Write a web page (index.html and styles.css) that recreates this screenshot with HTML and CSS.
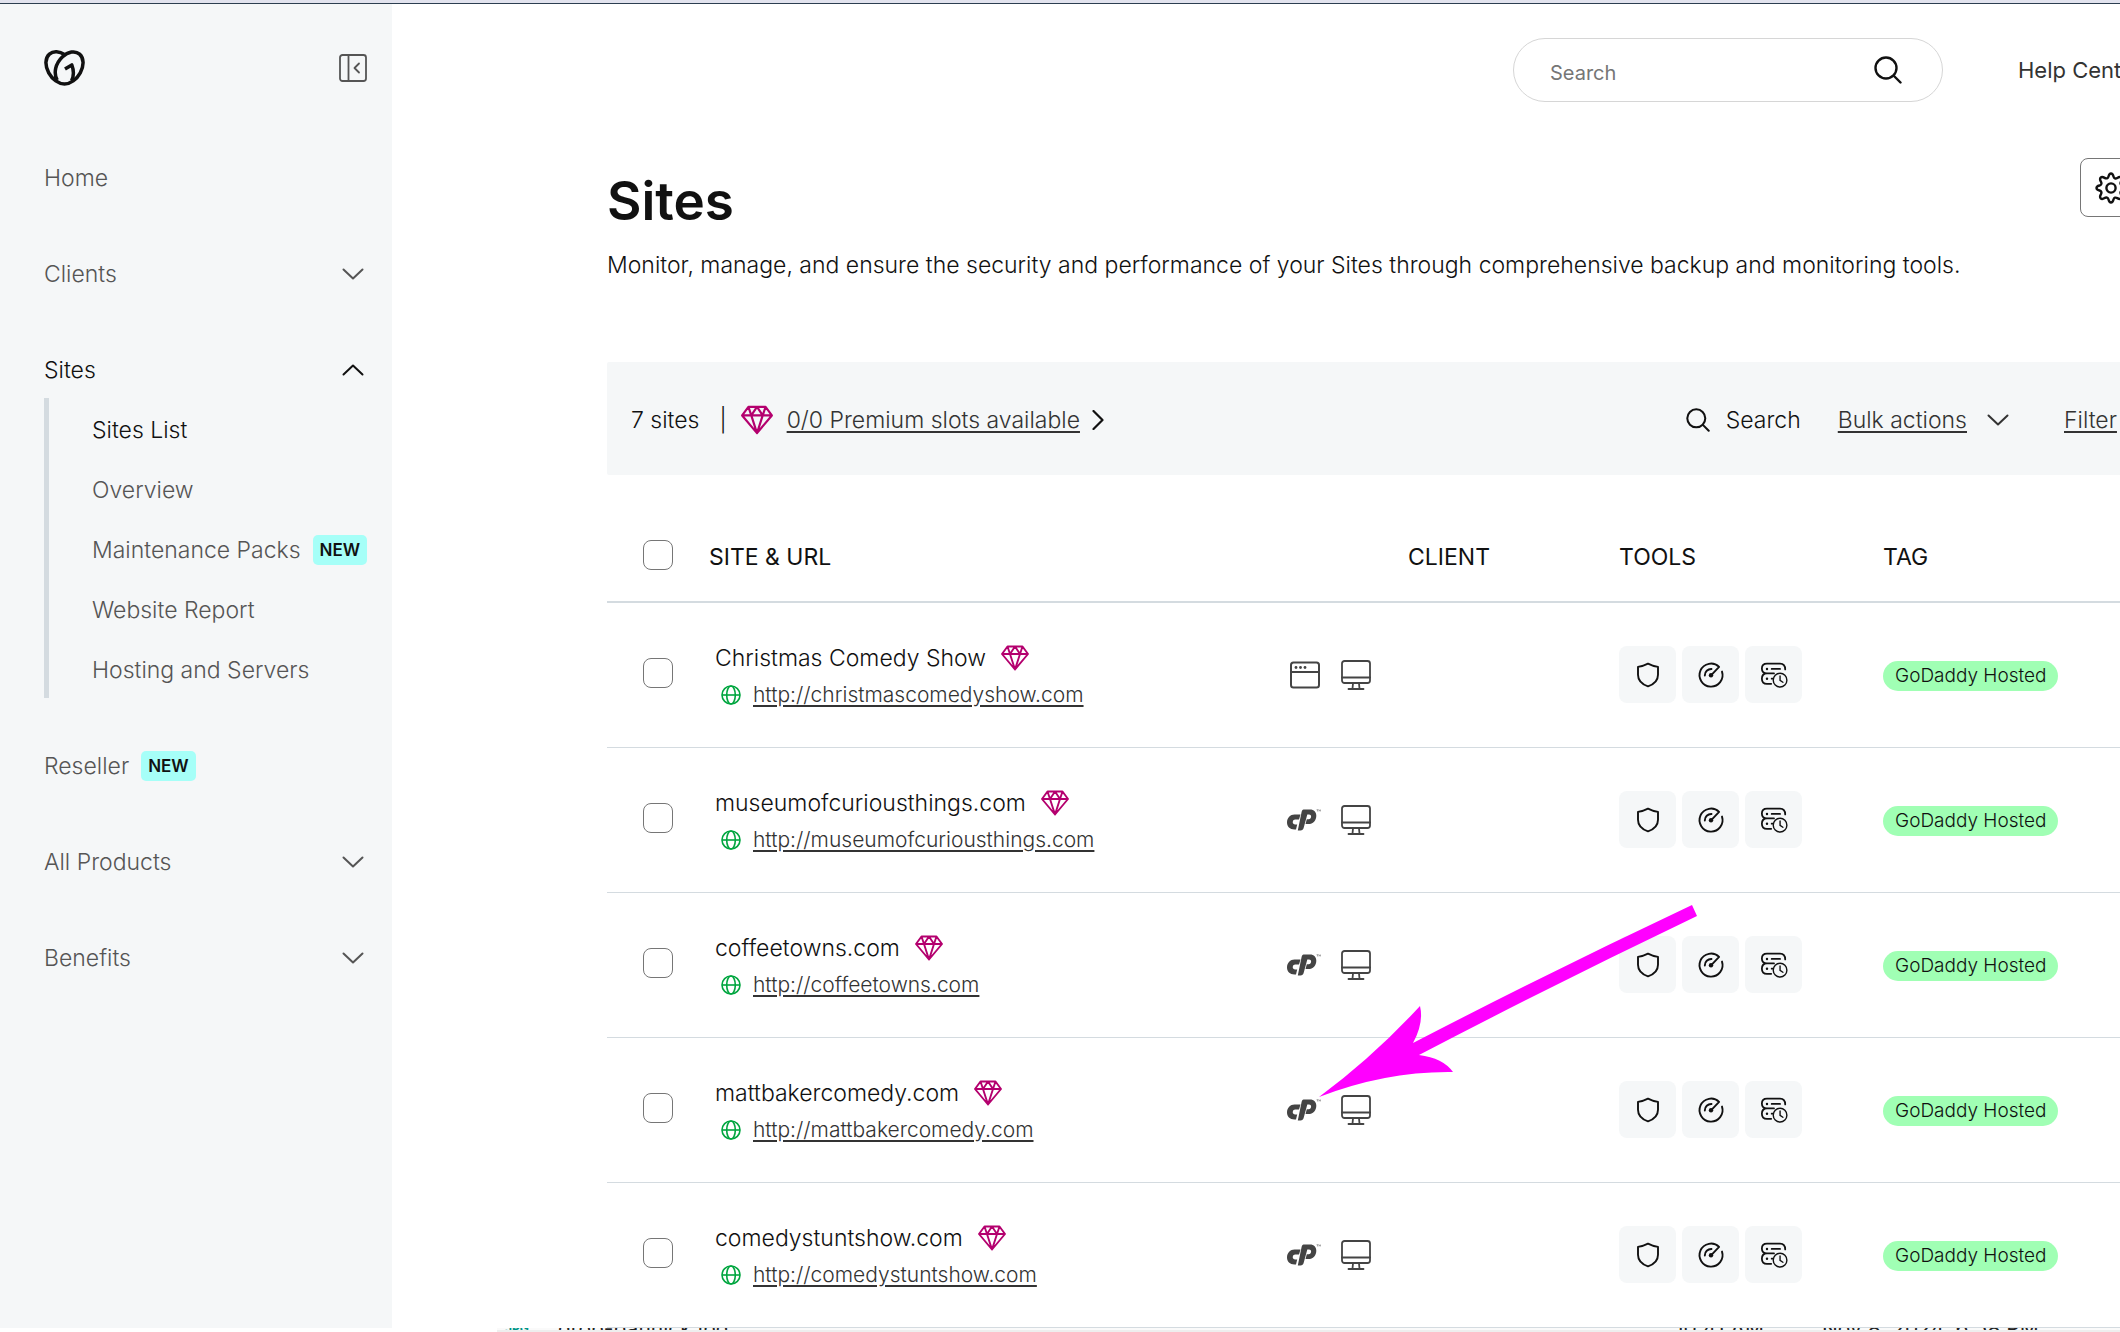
FILE: index.html
```html
<!DOCTYPE html>
<html lang="en">
<head>
<meta charset="utf-8">
<title>Sites</title>
<meta name="viewport" content="width=device-width, initial-scale=1">
<link rel="stylesheet" href="styles.css">
</head>
<body>
<svg class="sprite" aria-hidden="true">
  <symbol id="diamond" viewBox="0 0 28 26"><path d="M6.500 1.500h15L27 9 14 24.500 1 9zM1 9h26M6.500 1.500 9 9l5-7.500L19 9l2.500-7.500M9 9l5 15.500L19 9" fill="none" stroke="currentColor" stroke-width="1.900" stroke-linejoin="round"/></symbol>
  <symbol id="down" viewBox="0 0 22 12"><path d="M1.500 1.500 11 10.500l9.500-9" fill="none" stroke="currentColor" stroke-width="2" stroke-linecap="round" stroke-linejoin="round"/></symbol>
  <symbol id="search" viewBox="0 0 28 28"><g fill="none" stroke="currentColor" stroke-width="2.400" stroke-linecap="round"><circle cx="12" cy="12" r="10.500"/><path d="m20 20 6.500 6.500"/></g></symbol>
  <symbol id="globe" viewBox="0 0 20 20"><g fill="none" stroke="currentColor" stroke-width="1.600"><circle cx="10" cy="10" r="9"/><ellipse cx="10" cy="10" rx="4.300" ry="9"/><path d="M1 10h18"/></g></symbol>
  <symbol id="window" viewBox="0 0 30 30"><g fill="none" stroke="currentColor" stroke-width="2"><rect x="1" y="2.500" width="28" height="25" rx="2.500"/><path d="M1 12h28"/></g><g fill="currentColor"><circle cx="6" cy="7.500" r="1.400"/><circle cx="10.500" cy="7.500" r="1.400"/><circle cx="15" cy="7.500" r="1.400"/></g></symbol>
  <symbol id="monitor" viewBox="0 0 30 30"><g fill="none" stroke="currentColor" stroke-width="1.800" stroke-linecap="round"><rect x="1" y="1" width="28" height="22" rx="2.500"/><path d="M1 17.500h28M12 23.500l-.5 5M18 23.500l.5 5M7.500 29h15"/></g></symbol>
  <symbol id="cpanel" viewBox="0 0 34 22"><g fill="currentColor"><path d="M7.500 5.500h6l-1.500 5H8a2.400 2.400 0 0 0-2.300 2.400c0 1.500 1 2.500 2.500 2.500h2L9 20.500H7.500C2.800 20.500 0 17.300 0 13.500 0 9 3.300 5.500 7.500 5.500z"/><path d="M16.500.500H23c4 0 6.300 2.700 6.300 6.200 0 4.700-3.200 8.400-8 8.400h-2.800l1.300-4.900h1.800c1.500 0 2.500-1.200 2.500-2.700 0-1.200-.8-2-2-2h-1.800l-3.600 13.300c-.5 1.800-1.500 2.700-3.200 2.700h-2.700L14.600 3c.3-1.500 1-2.500 1.900-2.500z"/></g><path d="M29.500.700h2M30.500.700v1.800M32 2.500V.700l.8 1 .8-1v1.800" fill="none" stroke="currentColor" stroke-width=".4"/></symbol>
  <symbol id="shield" viewBox="0 0 28 28"><path d="M14 2.700c3 1.600 6 2.600 10 3.200v7.900c0 5.400-3.600 9.400-10 11.600-6.400-2.200-10-6.200-10-11.600V5.900c4-.6 7-1.600 10-3.200z" fill="none" stroke="currentColor" stroke-width="1.900" stroke-linejoin="round"/></symbol>
  <symbol id="gauge" viewBox="0 0 28 28"><g fill="none" stroke="currentColor" stroke-width="1.900" stroke-linecap="round"><path d="M22.100 5.900A11.500 11.500 0 1 0 25 10.600M22.100 5.900 14.500 13.800"/><path d="M7.800 14.500A6.400 6.400 0 0 1 14.500 8"/></g><circle cx="14" cy="14.200" r="2.200" fill="currentColor"/></symbol>
  <symbol id="backup" viewBox="0 0 30 28"><g fill="none" stroke="currentColor" stroke-width="1.900" stroke-linecap="round"><path d="M27 8c0-4-2-6.300-5.500-6.300h-14C4 1.700 2 3.800 2 7s2 5.300 5.500 5.300h7.500M7.500 12.300C4 12.300 2 14.500 2 18s2 5.500 5.500 5.500H12M12.500 7.500h9M12.500 18h1"/><circle cx="21.500" cy="19.500" r="7.300" stroke-width="1.500"/><path d="M21.500 15v4.800l3 2" stroke-width="1.500"/></g><g fill="currentColor"><circle cx="7.500" cy="7.500" r="1.300"/><circle cx="7.500" cy="18" r="1.300"/></g></symbol>
</svg>

<div class="app">
  <nav class="sidebar" aria-label="Main">
    <div class="brand">
      <svg class="logo" viewBox="0 0 42 37" fill="none" stroke="currentColor" stroke-width="3.600" stroke-linejoin="round"><path d="M21 4.700C16 1.300 9.500.700 5.500 4.200 1 8.200.700 16 4.800 23.500 8.500 30.300 15 35 21 35s12.500-4.700 16.200-11.500C41.300 16 41 8.200 36.500 4.200 32 .300 24.500 1.700 19 7 11.500 14 9.500 24 13.500 31"/><path d="M21.500 19.500l7-4.200c2.300 6 1.900 12-.2 16.200"/></svg>
      <button class="icon-button" aria-label="Collapse menu"><svg width="28" height="28" viewBox="0 0 28 28" fill="none" stroke="currentColor" stroke-width="1.800" stroke-linecap="round" stroke-linejoin="round"><rect x="1" y="1" width="26" height="26" rx="2.500"/><path d="M9.500 1v26M20 9.500 15.500 14l4.500 4.500"/></svg></button>
    </div>
    <ul class="menu">
      <li><a class="item" href="#">Home</a></li>
      <li><a class="item" href="#">Clients <svg class="chev"><use href="#down"/></svg></a></li>
      <li><a class="item current" href="#">Sites <svg class="chev up"><use href="#down"/></svg></a>
        <ul class="submenu">
          <li><a class="current" href="#">Sites List</a></li>
          <li><a href="#">Overview</a></li>
          <li><a href="#">Maintenance Packs <span class="badge">NEW</span></a></li>
          <li><a href="#">Website Report</a></li>
          <li><a href="#">Hosting and Servers</a></li>
        </ul>
      </li>
      <li><a class="item" href="#">Reseller <span class="badge">NEW</span></a></li>
      <li><a class="item" href="#">All Products <svg class="chev"><use href="#down"/></svg></a></li>
      <li><a class="item" href="#">Benefits <svg class="chev"><use href="#down"/></svg></a></li>
    </ul>
  </nav>

  <div class="main">
    <div class="canvas">
      <header class="topbar">
        <form class="searchbox">
          <input type="search" placeholder="Search" aria-label="Search">
          <button class="icon-button" type="button" aria-label="Submit search"><svg width="28" height="28"><use href="#search"/></svg></button>
        </form>
        <a class="help" href="#">Help Center</a>
      </header>
      <main class="content">
        <div class="heading">
          <h1>Sites</h1>
          <button class="settings" aria-label="Settings"><svg width="32" height="32" viewBox="0 0 32 32" fill="none" stroke="currentColor" stroke-width="2.400" stroke-linejoin="round"><path d="M13.500 4.500c.5-2 1.200-3 2.500-3s2 1 2.500 3 2 2.500 3.800 1.400 3-1.200 3.900-.2.800 2.200-.2 3.900-.5 3.300 1.500 3.900 3 1.200 3 2.500-1 2-3 2.500-2.500 2.200-1.500 3.900 1.200 2.900.2 3.900-2.200.8-3.900-.2-3.300-.5-3.800 1.400-1.200 3-2.500 3-2-1-2.500-3-2.200-2.500-3.900-1.400-2.900 1.200-3.900.2-.8-2.200.2-3.900.5-3.400-1.400-3.900-3-1.200-3-2.500 1-2 3-2.500 2.400-2.200 1.400-3.900-1.200-2.900-.2-3.900 2.200-.8 3.900.2 3.400.5 3.900-1.400z"/><circle cx="16" cy="16" r="4.600"/></svg></button>
        </div>
        <p class="lead">Monitor, manage, and ensure the security and performance of your Sites through comprehensive backup and monitoring tools.</p>

        <div class="toolbar">
          <span class="count">7 sites</span>
          <span class="bar">|</span>
          <svg class="gem big"><use href="#diamond"/></svg>
          <a href="#">0/0 Premium slots available</a>
          <svg class="next" viewBox="0 0 12 20"><path d="M1.500 1 10.500 10l-9 9" fill="none" stroke="currentColor" stroke-width="2.200" stroke-linecap="round" stroke-linejoin="round"/></svg>
          <button class="tool-search"><svg width="24" height="24"><use href="#search"/></svg>Search</button>
          <button class="bulk"><span>Bulk actions</span><svg class="chev"><use href="#down"/></svg></button>
          <button class="filter"><span>Filter</span></button>
        </div>

        <table>
          <thead>
            <tr><th class="c-check"><input type="checkbox" aria-label="Select all sites"></th><th class="c-site">SITE &amp; URL</th><th class="c-type"></th><th class="c-client">CLIENT</th><th class="c-tools">TOOLS</th><th>TAG</th></tr>
          </thead>
          <tbody>
            <tr>
              <td><input type="checkbox" aria-label="Select Christmas Comedy Show"></td>
              <td><div class="name">Christmas Comedy Show <svg class="gem"><use href="#diamond"/></svg></div><div class="url"><svg><use href="#globe"/></svg><a href="#">http://christmascomedyshow.com</a></div></td>
              <td><div class="types"><svg class="win"><use href="#window"/></svg><svg><use href="#monitor"/></svg></div></td>
              <td></td>
              <td><div class="tools"><button aria-label="Security"><svg><use href="#shield"/></svg></button><button aria-label="Performance"><svg><use href="#gauge"/></svg></button><button aria-label="Backups"><svg><use href="#backup"/></svg></button></div></td>
              <td><span class="tag">GoDaddy Hosted</span></td>
            </tr>
            <tr>
              <td><input type="checkbox" aria-label="Select museumofcuriousthings.com"></td>
              <td><div class="name">museumofcuriousthings.com <svg class="gem"><use href="#diamond"/></svg></div><div class="url"><svg><use href="#globe"/></svg><a href="#">http://museumofcuriousthings.com</a></div></td>
              <td><div class="types"><svg class="cp"><use href="#cpanel"/></svg><svg><use href="#monitor"/></svg></div></td>
              <td></td>
              <td><div class="tools"><button aria-label="Security"><svg><use href="#shield"/></svg></button><button aria-label="Performance"><svg><use href="#gauge"/></svg></button><button aria-label="Backups"><svg><use href="#backup"/></svg></button></div></td>
              <td><span class="tag">GoDaddy Hosted</span></td>
            </tr>
            <tr>
              <td><input type="checkbox" aria-label="Select coffeetowns.com"></td>
              <td><div class="name">coffeetowns.com <svg class="gem"><use href="#diamond"/></svg></div><div class="url"><svg><use href="#globe"/></svg><a href="#">http://coffeetowns.com</a></div></td>
              <td><div class="types"><svg class="cp"><use href="#cpanel"/></svg><svg><use href="#monitor"/></svg></div></td>
              <td></td>
              <td><div class="tools"><button aria-label="Security"><svg><use href="#shield"/></svg></button><button aria-label="Performance"><svg><use href="#gauge"/></svg></button><button aria-label="Backups"><svg><use href="#backup"/></svg></button></div></td>
              <td><span class="tag">GoDaddy Hosted</span></td>
            </tr>
            <tr>
              <td><input type="checkbox" aria-label="Select mattbakercomedy.com"></td>
              <td><div class="name">mattbakercomedy.com <svg class="gem"><use href="#diamond"/></svg></div><div class="url"><svg><use href="#globe"/></svg><a href="#">http://mattbakercomedy.com</a></div></td>
              <td><div class="types"><svg class="cp"><use href="#cpanel"/></svg><svg><use href="#monitor"/></svg>
                <svg class="arrow" viewBox="0 0 380 194"><path d="M373 1 378 12 Q238 79 100 151 Q124 154 134 168 Q67 167 0 193 Q54 153 101 102 Q105 119 94 139 Q233 67 373 1z" fill="#f0f"/></svg></div></td>
              <td></td>
              <td><div class="tools"><button aria-label="Security"><svg><use href="#shield"/></svg></button><button aria-label="Performance"><svg><use href="#gauge"/></svg></button><button aria-label="Backups"><svg><use href="#backup"/></svg></button></div></td>
              <td><span class="tag">GoDaddy Hosted</span></td>
            </tr>
            <tr>
              <td><input type="checkbox" aria-label="Select comedystuntshow.com"></td>
              <td><div class="name">comedystuntshow.com <svg class="gem"><use href="#diamond"/></svg></div><div class="url"><svg><use href="#globe"/></svg><a href="#">http://comedystuntshow.com</a></div></td>
              <td><div class="types"><svg class="cp"><use href="#cpanel"/></svg><svg><use href="#monitor"/></svg></div></td>
              <td></td>
              <td><div class="tools"><button aria-label="Security"><svg><use href="#shield"/></svg></button><button aria-label="Performance"><svg><use href="#gauge"/></svg></button><button aria-label="Backups"><svg><use href="#backup"/></svg></button></div></td>
              <td><span class="tag">GoDaddy Hosted</span></td>
            </tr>
          </tbody>
        </table>
      </main>
    </div>
  </div>
</div>
<footer class="filestrip"><div class="filerow"><span class="filetype">JPG</span><span class="filename">drop-bannick.jpg</span><span class="filetime">10:41 AM</span><span>Nov 8, 2024, 6:58 PM</span></div></footer>
</body>
</html>
```
FILE: styles.css
```css
* { box-sizing: border-box; }
body {
  margin: 0;
  height: 100vh;
  display: flex;
  flex-direction: column;
  overflow: hidden;
  background: #fff;
  color: #111;
  font: 300 23px/32px Inter, "Liberation Sans", sans-serif;
  border-top: 3px solid #e2e3ee;
}
a { color: inherit; }
ul { list-style: none; margin: 0; padding: 0; }
button { font: inherit; color: inherit; border: 0; background: none; padding: 0; }
svg { display: block; flex: none; }
.sprite { position: absolute; width: 0; height: 0; }

.app { flex: 1; min-height: 0; display: flex; border-top: 1px solid #2c3e50; overflow: hidden; }

/* Sidebar */
.sidebar { width: 392px; flex: none; background: #f5f7f8; color: #555; padding: 46px 24px 0 44px; }
.brand { display: flex; justify-content: space-between; align-items: center; height: 36px; margin-bottom: 64px; }
.logo { width: 41px; height: 36px; color: #111; }
.brand .icon-button { margin-right: 1px; }
.menu { display: flex; flex-direction: column; gap: 40px; }
.menu a { text-decoration: none; display: flex; align-items: center; gap: 12px; }
.item { height: 56px; }
.item .chev { margin-left: auto; margin-right: 4px; }
.menu .current { color: #111; }
.chev { width: 22px; height: 12px; }
.up { transform: rotate(180deg); }
.submenu { border-left: 5px solid #d4dbe0; padding-left: 43px; }
.submenu a { height: 60px; white-space: nowrap; padding-top: 4px; }
.badge { background: #a6fff8; color: #111; border-radius: 5px; font-size: 17px; font-weight: 600; line-height: 30px; padding: 0 7px; }

/* Main area runs on past the right edge of the window */
.main { flex: 1; min-width: 0; overflow: hidden; }
.canvas { width: calc(100% + 200px); }
.topbar { display: flex; justify-content: flex-end; align-items: center; padding-top: 34px; }
.searchbox { width: 430px; height: 64px; border: 1px solid #d6d6d6; border-radius: 32px; display: flex; align-items: center; padding: 0 40px 0 36px; margin-right: 75px; }
.searchbox input { flex: 1; min-width: 0; border: 0; background: none; padding: 5px 0 0; font: 400 20px/28px Inter, sans-serif; color: #111; }
.searchbox input::placeholder { color: #767676; opacity: 1; }
.help { width: 302px; text-decoration: none; color: #333; font-size: 22px; font-weight: 400; }

.content { padding-left: 215px; }
.heading { display: flex; justify-content: space-between; align-items: flex-start; margin-top: 56px; }
h1 { margin: 7px 0 0; font-size: 53px; line-height: 72px; font-weight: 600; }
.settings { width: 240px; height: 59px; border: 1px solid #767676; border-radius: 8px; padding-left: 14px; }
.lead { margin: 12px 0 0; white-space: nowrap; }

.toolbar { margin-top: 81px; height: 113px; background: #f5f7f8; border-radius: 2px; display: flex; align-items: center; padding: 2px 0 0 24px; white-space: nowrap; }
.toolbar a, .bulk, .filter { color: #333; }
.bulk span, .filter span { text-decoration: underline 2px; text-underline-offset: 3px; }
.toolbar a, .url a { text-decoration-thickness: 2px; text-underline-offset: 3px; }
.bar { margin: 0 14px 0 20px; }
.gem { width: 28px; height: 26px; color: #b4006e; }
.big { width: 32px; height: 30px; margin-right: 14px; }
.next { width: 12px; height: 20px; margin-left: 12px; }
.tool-search { display: flex; align-items: center; gap: 16px; margin-left: auto; margin-right: 37px; }
.bulk { display: flex; align-items: center; gap: 20px; margin-right: 55px; }
.filter { width: 256px; text-align: left; }

/* Table */
table { width: 100%; border-collapse: collapse; table-layout: fixed; }
th, td { padding: 0; text-align: left; }
th { height: 127px; padding-top: 38px; font-weight: 400; }
thead tr { border-bottom: 2px solid #d4dbe0; }
tbody tr { height: 145px; border-bottom: 1px solid #d4dbe0; }
.c-check { width: 102px; }
.c-site { width: 575px; }
.c-type { width: 124px; }
.c-client { width: 211px; }
.c-tools { width: 264px; }
input[type="checkbox"] { appearance: none; display: block; width: 30px; height: 30px; margin: 0 0 4px 36px; border: 1px solid #767676; border-radius: 8px; background: #fff; }
.name { display: flex; align-items: center; gap: 15px; padding: 4px 0 0 6px; line-height: 36px; }
.url { display: flex; align-items: center; gap: 12px; padding-left: 12px; line-height: 38px; font-size: 21px; color: #333; }
.url svg { width: 20px; height: 20px; color: #00a63f; }
.types { display: flex; align-items: center; position: relative; color: #444; padding-left: 3px; }
.types svg { width: 30px; height: 30px; }
.types .win { margin: 0 21px 0 3px; }
.types .cp { width: 34px; height: 22px; margin-right: 20px; }
.types .arrow { position: absolute; width: 380px; height: 194px; left: 35px; top: -191px; z-index: 1; }
.tools { display: flex; gap: 6px; }
.tools button { width: 57px; height: 57px; border-radius: 8px; background: #f5f7f8; display: grid; place-items: center; }
.tools svg { width: 28px; height: 28px; }
.tag { display: inline-block; background: #a0ffb4; border-radius: 15px; font-size: 19px; line-height: 30px; padding: 0 12px; }

/* Sliver of the file list showing under the app */
.filestrip { height: 4px; flex: none; border-bottom: 2px solid #eee; margin-left: 497px; overflow: hidden; display: flex; align-items: center; background: #fafafa; }
.filerow { display: flex; color: #222; font-size: 21px; font-weight: 400; line-height: 24px; }
.filetype { width: 61px; padding-left: 8px; color: #009688; font-size: 12px; font-weight: 700; }
.filename { width: 1117px; }
.filetime { width: 147px; }
```
